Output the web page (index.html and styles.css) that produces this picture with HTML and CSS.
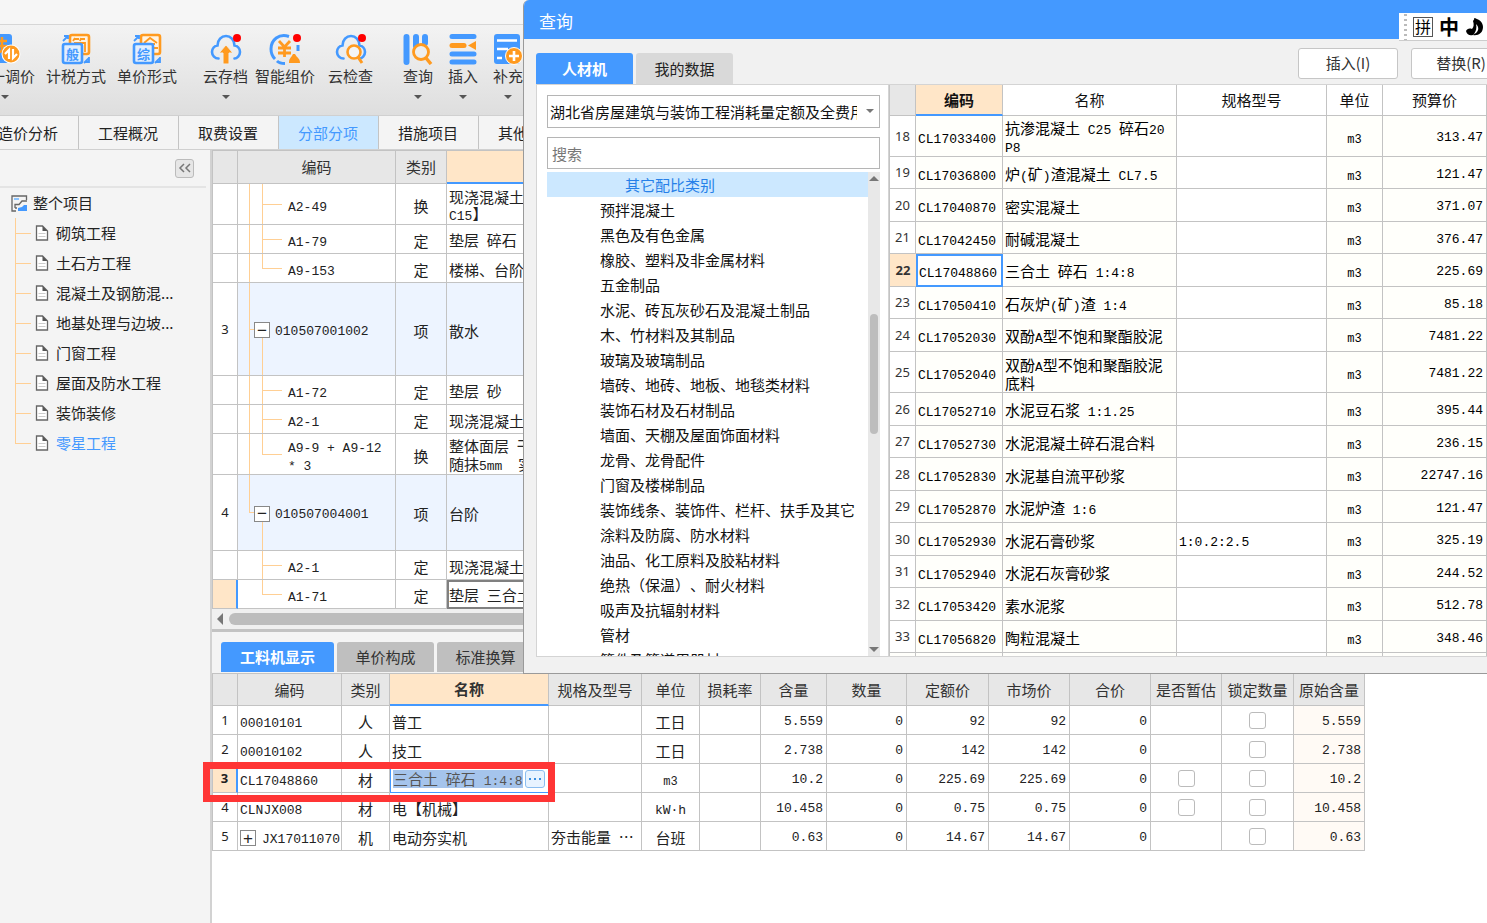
FILE: index.html
```html
<!DOCTYPE html>
<html lang="zh-CN">
<head>
<meta charset="utf-8">
<title>分部分项</title>
<link rel="stylesheet" href="styles.css">
</head>
<body>
<svg class="defs" aria-hidden="true">
  <symbol id="doc" viewBox="0 0 14 16"><path d="M1.500 1h6l5 5v9h-11z" fill="#fff" stroke="#666" stroke-width="1.300"/><path d="M7.500 1l5 5h-5z" fill="#555"/><path d="M3.500 8.500h7M3.500 11.500h7" stroke="#ccc"/></symbol>
  <symbol id="cloud" viewBox="0 0 32 32"><path d="M8.500 25.500C5 25.500 2 22.500 2 19c0-3.500 2.500-6 5.500-6.500C7.500 7 11.500 3 16 3s8.500 4 8.500 9.500C27.500 13 30 15.500 30 19c0 3.500-3 6.500-5.500 6.500" fill="none" stroke="#4499ff" stroke-width="2.600" stroke-linecap="round"/></symbol>
</svg>
<div class="app">
  <header class="titlebar"></header>
  <div class="ribbon">
    <div class="group group-price">
      <button class="tool"><svg class="pic" viewBox="0 0 32 32"><rect x="1" y="1" width="22" height="29" rx="3" fill="#4499ff"/><path d="M7 8h11M5 13h13M13 4v14l-5 2" stroke="#ff9a1f" stroke-width="2.500" fill="none"/><circle cx="22" cy="21" r="9.500" fill="#fff"/><circle cx="22" cy="21" r="8.500" fill="#ff9a1f"/><path d="M20 26v-9l-4 4M24 16v9l4-4" stroke="#fff" stroke-width="2.200" fill="none"/></svg><span>统一调价</span><i class="caret"></i></button>
      <button class="tool"><svg class="pic" viewBox="0 0 32 32"><rect x="10" y="2" width="19" height="19" rx="2" fill="#fff3e2" stroke="#ff9a1f" stroke-width="2.600"/><path d="M15 5l-2 3M14 6h5M21 5l-1 3M20 6h5M14 10h11v9" stroke="#ff9a1f" stroke-width="1.800" fill="none"/><rect x="3" y="11" width="19" height="19" rx="2" fill="#e2effd" stroke="#4499ff" stroke-width="2.600"/><text x="12.500" y="25.500" class="glyph">般</text><path d="M3 8l5-5M4 3h4v3M24 30l5-5M29 24v5h-4" stroke="#4499ff" stroke-width="1.800" fill="none"/></svg><span>计税方式</span></button>
      <button class="tool"><svg class="pic" viewBox="0 0 32 32"><rect x="10" y="2" width="19" height="19" rx="2" fill="#fff3e2" stroke="#ff9a1f" stroke-width="2.600"/><path d="M13 10l6-5 7 5M15 11h9M23 15h4" stroke="#ff9a1f" stroke-width="1.800" fill="none"/><rect x="3" y="11" width="19" height="19" rx="2" fill="#e2effd" stroke="#4499ff" stroke-width="2.600"/><text x="12.500" y="25.500" class="glyph">综</text><path d="M3 8l5-5M4 3h4v3M24 30l5-5M29 24v5h-4" stroke="#4499ff" stroke-width="1.800" fill="none"/></svg><span>单价形式</span></button>
    </div>
    <div class="group group-cloud">
      <button class="tool"><svg class="pic" viewBox="0 0 32 32"><use href="#cloud"/><path d="M16 12l7 8h-4v11h-6V20H9z" fill="#ff9a1f" stroke="#eee"/><circle cx="27" cy="5" r="4" fill="#f00"/></svg><span>云存档</span><i class="caret"></i></button>
      <button class="tool"><svg class="pic" viewBox="0 0 32 32"><path d="M20 3.500C10 0 2 7 2 16c0 5 2 8 4 10M8 28c2 2 5 2.500 8 2.500M29 12v6" fill="none" stroke="#4499ff" stroke-width="3"/><path d="M10 8l5.500 6L21 8M9 15h13M9 20h13M15.500 13v11" fill="none" stroke="#ff9a1f" stroke-width="2.800"/><path d="M20 30c0-5 2-5 4-9h2c2 4 5 4 5 9z" fill="#ff9a1f"/><circle cx="28" cy="5" r="4" fill="#f00"/></svg><span>智能组价</span></button>
    </div>
    <div class="group group-check">
      <button class="tool"><svg class="pic" viewBox="0 0 32 32"><use href="#cloud"/><circle cx="19" cy="19" r="6.500" fill="#f4f4f4" stroke="#ff9a1f" stroke-width="2.600"/><path d="M23 24l4 6" stroke="#ff9a1f" stroke-width="3"/><circle cx="27" cy="5" r="4" fill="#f00"/></svg><span>云检查</span></button>
    </div>
    <div class="group group-edit">
      <button class="tool"><svg class="pic" viewBox="0 0 32 32"><path d="M4.500 4v25M14 4v9M23 4v6" stroke="#4499ff" stroke-width="6" stroke-linecap="round"/><circle cx="19" cy="19" r="7.500" fill="#eee" stroke="#ff9a1f" stroke-width="2.800"/><path d="M24 25l5 6" stroke="#ff9a1f" stroke-width="3.500"/></svg><span>查询</span><i class="caret"></i></button>
      <button class="tool"><svg class="pic" viewBox="0 0 32 32"><path d="M5 3.500h22M5 21h22M5 29h22" stroke="#4499ff" stroke-width="5" stroke-linecap="round"/><path d="M5 12.500h12" stroke="#ff9a1f" stroke-width="5" stroke-linecap="round"/><path d="M21 12.500l8-4.500v9z" fill="#ff9a1f"/></svg><span>插入</span><i class="caret"></i></button>
      <button class="tool"><svg class="pic" viewBox="0 0 32 32"><rect x="2" y="1" width="26" height="30" rx="3" fill="#4499ff"/><path d="M5 7.500h20M5 16h11M5 25h5" stroke="#fff" stroke-width="2.500"/><circle cx="22" cy="23" r="8.500" fill="#ff9a1f" stroke="#fff"/><path d="M17 23h10M22 18v10" stroke="#fff" stroke-width="2.600"/></svg><span>补充</span><i class="caret"></i></button>
    </div>
  </div>
  <nav class="tabs">
    <button>造价分析</button><button>工程概况</button><button>取费设置</button><button class="on">分部分项</button><button>措施项目</button><button>其他项目</button>
  </nav>
  <div class="main">
    <aside class="side">
      <div class="side-head"><button class="collapse" aria-label="收起"><svg viewBox="0 0 14 12" width="14" height="12"><path d="M6 2L2 6l4 4M12 2L8 6l4 4" fill="none" stroke="#777" stroke-width="1.500"/></svg></button></div>
      <div class="root"><svg viewBox="0 0 17 17" width="17" height="17"><path d="M15.500 5V1H1v15h4" fill="none" stroke="#666" stroke-width="1.300"/><path d="M3 4h5" stroke="#8cc4ff" stroke-width="2"/><path d="M4 13V9.500h4L11 6h5M4 13h2" fill="none" stroke="#666" stroke-width="1.300"/><path d="M7 16v-3l4-1 2-2h3v6z" fill="#4499ff"/></svg>整个项目</div>
      <ul class="tree">
        <li><svg><use href="#doc"/></svg>砌筑工程</li>
        <li><svg><use href="#doc"/></svg>土石方工程</li>
        <li><svg><use href="#doc"/></svg>混凝土及钢筋混...</li>
        <li><svg><use href="#doc"/></svg>地基处理与边坡...</li>
        <li><svg><use href="#doc"/></svg>门窗工程</li>
        <li><svg><use href="#doc"/></svg>屋面及防水工程</li>
        <li><svg><use href="#doc"/></svg>装饰装修</li>
        <li class="on"><svg><use href="#doc"/></svg>零星工程</li>
      </ul>
    </aside>
    <section class="work">
      <table class="grid items">
        <colgroup><col class="w26"><col class="w158"><col class="w51"><col></colgroup>
        <thead><tr><th></th><th>编码</th><th>类别</th><th class="hot"></th></tr></thead>
        <tbody>
          <tr class="two"><td></td><td class="kid"><b>A2-49</b></td><td class="c">换</td><td>现浇混凝土<br><b>C15</b>】</td></tr>
          <tr><td></td><td class="kid"><b>A1-79</b></td><td class="c">定</td><td>垫层<b> </b>碎石</td></tr>
          <tr><td></td><td class="kid last"><b>A9-153</b></td><td class="c">定</td><td>楼梯、台阶</td></tr>
          <tr class="parent tall"><td class="n">3</td><td class="grp"><button class="exp" aria-label="折叠">−</button><b>010507001002</b></td><td class="c">项</td><td>散水</td></tr>
          <tr><td></td><td class="kid"><b>A1-72</b></td><td class="c">定</td><td>垫层<b> </b>砂</td></tr>
          <tr><td></td><td class="kid"><b>A2-1</b></td><td class="c">定</td><td>现浇混凝土</td></tr>
          <tr class="two"><td></td><td class="kid last"><b>A9-9 + A9-12<br>* 3</b></td><td class="c">换</td><td>整体面层<b> </b>干<br>随抹<b>5mm&nbsp; </b>实</td></tr>
          <tr class="parent mid"><td class="n">4</td><td class="grp end"><button class="exp" aria-label="折叠">−</button><b>010507004001</b></td><td class="c">项</td><td>台阶</td></tr>
          <tr><td></td><td class="kid only"><b>A2-1</b></td><td class="c">定</td><td>现浇混凝土</td></tr>
          <tr><td class="n cur"></td><td class="kid only last"><b>A1-71</b></td><td class="c">定</td><td class="focus">垫层<b> </b>三合土</td></tr>
        </tbody>
      </table>
      <div class="hscroll"><i class="left"></i><i class="thumb"></i></div>
      <div class="subtabs"><button class="on">工料机显示</button><button>单价构成</button><button>标准换算</button></div>
      <div class="detail">
        <table class="grid parts">
          <colgroup><col class="w26"><col class="w104"><col class="w48"><col class="w159"><col class="w93"><col class="w58"><col class="w61"><col class="w66"><col class="w80"><col class="w82"><col class="w81"><col class="w81"><col class="w71"><col class="w72"><col class="w71"></colgroup>
          <thead><tr><th></th><th>编码</th><th>类别</th><th class="hot">名称</th><th>规格及型号</th><th>单位</th><th>损耗率</th><th>含量</th><th>数量</th><th>定额价</th><th>市场价</th><th>合价</th><th>是否暂估</th><th>锁定数量</th><th>原始含量</th></tr></thead>
          <tbody>
            <tr><td class="n">1</td><td><b>00010101</b></td><td class="c">人</td><td>普工</td><td></td><td class="c">工日</td><td></td><td class="r">5.559</td><td class="r">0</td><td class="r">92</td><td class="r">92</td><td class="r">0</td><td></td><td class="c"><input type="checkbox" aria-label="锁定数量"></td><td class="r orig">5.559</td></tr>
            <tr><td class="n">2</td><td><b>00010102</b></td><td class="c">人</td><td>技工</td><td></td><td class="c">工日</td><td></td><td class="r">2.738</td><td class="r">0</td><td class="r">142</td><td class="r">142</td><td class="r">0</td><td></td><td class="c"><input type="checkbox" aria-label="锁定数量"></td><td class="r orig">2.738</td></tr>
            <tr><td class="n cur">3</td><td><b>CL17048860</b></td><td class="c">材</td><td class="edit"><div><span class="sel">三合土<b> </b>碎石<b> 1:4:8</b></span><button class="more" aria-label="更多"><svg viewBox="0 0 14 4" width="14" height="4"><path d="M1 1h2v2H1zM6 1h2v2H6zM11 1h2v2h-2z" fill="#3a8ee0"/></svg></button></div></td><td></td><td class="c"><b class="unit">m3</b></td><td></td><td class="r">10.2</td><td class="r">0</td><td class="r">225.69</td><td class="r">225.69</td><td class="r">0</td><td class="c"><input type="checkbox" aria-label="是否暂估"></td><td class="c"><input type="checkbox" aria-label="锁定数量"></td><td class="r orig">10.2</td></tr>
            <tr><td class="n">4</td><td><b>CLNJX008</b></td><td class="c">材</td><td>电【机械】</td><td></td><td class="c"><b>kW·h</b></td><td></td><td class="r">10.458</td><td class="r">0</td><td class="r">0.75</td><td class="r">0.75</td><td class="r">0</td><td class="c"><input type="checkbox" aria-label="是否暂估"></td><td class="c"><input type="checkbox" aria-label="锁定数量"></td><td class="r orig">10.458</td></tr>
            <tr><td class="n">5</td><td><button class="exp" aria-label="展开">+</button><b>JX17011070</b></td><td class="c">机</td><td>电动夯实机</td><td>夯击能量<b> </b>⋯</td><td class="c">台班</td><td></td><td class="r">0.63</td><td class="r">0</td><td class="r">14.67</td><td class="r">14.67</td><td class="r">0</td><td></td><td class="c"><input type="checkbox" aria-label="锁定数量"></td><td class="r orig">0.63</td></tr>
          </tbody>
        </table>
        <div class="mark"></div>
      </div>
    </section>
  </div>

  <div class="dialog" role="dialog" aria-label="查询">
    <div class="dlg-title">查询</div>
    <div class="ime"><i class="grip"></i><span class="pin">拼</span><span class="zh">中</span><svg viewBox="0 0 20 20" width="20" height="20"><path d="M9 1c5 1 9 4 9 9 0 6-5 9-10 8 5-3 6-9 1-17z" fill="#000"/><path d="M1 14c1-2 3-3 6-2 2-2 2-5 1-8l2-3c4 7 3 14-2 17-3 1-6 0-7-4z" fill="#000"/><path d="M11 7c3 3 3 6 0 9l-2 1c2-3 3-6 2-10z" fill="#fff"/></svg></div>
    <div class="dlg-bar">
      <div class="dlg-tabs"><button class="on">人材机</button><button>我的数据</button></div>
      <div class="dlg-actions"><button>插入(I)</button><button>替换(R)</button></div>
    </div>
    <div class="dlg-body">
      <div class="pick">
        <div class="combo"><select aria-label="定额库"><option>湖北省房屋建筑与装饰工程消耗量定额及全费用基价表</option></select></div>
        <input class="search" type="text" placeholder="搜索" aria-label="搜索">
        <div class="list">
          <ul>
            <li class="on">其它配比类别</li><li>预拌混凝土</li><li>黑色及有色金属</li><li>橡胶、塑料及非金属材料</li><li>五金制品</li><li>水泥、砖瓦灰砂石及混凝土制品</li><li>木、竹材料及其制品</li><li>玻璃及玻璃制品</li><li>墙砖、地砖、地板、地毯类材料</li><li>装饰石材及石材制品</li><li>墙面、天棚及屋面饰面材料</li><li>龙骨、龙骨配件</li><li>门窗及楼梯制品</li><li>装饰线条、装饰件、栏杆、扶手及其它</li><li>涂料及防腐、防水材料</li><li>油品、化工原料及胶粘材料</li><li>绝热（保温）、耐火材料</li><li>吸声及抗辐射材料</li><li>管材</li><li>管件及管道用器材</li>
          </ul>
          <div class="vscroll"><i class="up"></i><i class="thumb"></i><i class="down"></i></div>
        </div>
      </div>
      <div class="result">
        <table class="grid mats">
          <colgroup><col class="w27"><col class="w87"><col class="w174"><col class="w150"><col class="w56"><col></colgroup>
          <thead><tr><th class="corner"></th><th class="hot">编码</th><th>名称</th><th>规格型号</th><th>单位</th><th>预算价</th></tr></thead>
          <tbody>
            <tr class="two"><td class="n">18</td><td><b>CL17033400</b></td><td>抗渗混凝土<b> C25 </b>碎石<b>20</b><br><b>P8</b></td><td></td><td class="c"><b class="unit">m3</b></td><td class="r">313.47</td></tr>
            <tr><td class="n">19</td><td><b>CL17036800</b></td><td>炉<b>(</b>矿<b>)</b>渣混凝土<b> CL7.5</b></td><td></td><td class="c"><b class="unit">m3</b></td><td class="r">121.47</td></tr>
            <tr><td class="n">20</td><td><b>CL17040870</b></td><td>密实混凝土</td><td></td><td class="c"><b class="unit">m3</b></td><td class="r">371.07</td></tr>
            <tr><td class="n">21</td><td><b>CL17042450</b></td><td>耐碱混凝土</td><td></td><td class="c"><b class="unit">m3</b></td><td class="r">376.47</td></tr>
            <tr><td class="n cur">22</td><td class="pickd"><b>CL17048860</b></td><td>三合土<b> </b>碎石<b> 1:4:8</b></td><td></td><td class="c"><b class="unit">m3</b></td><td class="r">225.69</td></tr>
            <tr><td class="n">23</td><td><b>CL17050410</b></td><td>石灰炉<b>(</b>矿<b>)</b>渣<b> 1:4</b></td><td></td><td class="c"><b class="unit">m3</b></td><td class="r">85.18</td></tr>
            <tr><td class="n">24</td><td><b>CL17052030</b></td><td>双酚<b>A</b>型不饱和聚酯胶泥</td><td></td><td class="c"><b class="unit">m3</b></td><td class="r">7481.22</td></tr>
            <tr class="two"><td class="n">25</td><td><b>CL17052040</b></td><td>双酚<b>A</b>型不饱和聚酯胶泥<br>底料</td><td></td><td class="c"><b class="unit">m3</b></td><td class="r">7481.22</td></tr>
            <tr><td class="n">26</td><td><b>CL17052710</b></td><td>水泥豆石浆<b> 1:1.25</b></td><td></td><td class="c"><b class="unit">m3</b></td><td class="r">395.44</td></tr>
            <tr><td class="n">27</td><td><b>CL17052730</b></td><td>水泥混凝土碎石混合料</td><td></td><td class="c"><b class="unit">m3</b></td><td class="r">236.15</td></tr>
            <tr><td class="n">28</td><td><b>CL17052830</b></td><td>水泥基自流平砂浆</td><td></td><td class="c"><b class="unit">m3</b></td><td class="r">22747.16</td></tr>
            <tr><td class="n">29</td><td><b>CL17052870</b></td><td>水泥炉渣<b> 1:6</b></td><td></td><td class="c"><b class="unit">m3</b></td><td class="r">121.47</td></tr>
            <tr><td class="n">30</td><td><b>CL17052930</b></td><td>水泥石膏砂浆</td><td><b>1:0.2:2.5</b></td><td class="c"><b class="unit">m3</b></td><td class="r">325.19</td></tr>
            <tr><td class="n">31</td><td><b>CL17052940</b></td><td>水泥石灰膏砂浆</td><td></td><td class="c"><b class="unit">m3</b></td><td class="r">244.52</td></tr>
            <tr><td class="n">32</td><td><b>CL17053420</b></td><td>素水泥浆</td><td></td><td class="c"><b class="unit">m3</b></td><td class="r">512.78</td></tr>
            <tr><td class="n">33</td><td><b>CL17056820</b></td><td>陶粒混凝土</td><td></td><td class="c"><b class="unit">m3</b></td><td class="r">348.46</td></tr>
            <tr><td></td><td></td><td></td><td></td><td></td><td></td></tr>
          </tbody>
        </table>
      </div>
    </div>
  </div>
</div>
</body>
</html>
```
FILE: styles.css
```css
* { box-sizing: border-box; }
body { margin: 0; overflow: hidden; background: #f4f4f4; color: #222; font: 15px/20px "Noto Sans CJK SC", sans-serif; text-spacing-trim: space-all; }
button, input, select { font: inherit; color: inherit; margin: 0; }
button { padding: 0; border: 0; background: none; white-space: nowrap; }
ul { list-style: none; margin: 0; padding: 0; }
.defs { display: none; }
.app { position: relative; display: flex; flex-direction: column; height: 100vh; overflow: hidden; }
.titlebar { flex: none; height: 25px; background: #f6f6f6; border-bottom: 1px solid #d6d6d6; }

/* ribbon */
.ribbon { flex: none; display: flex; height: 91px; padding-top: 8px; background: linear-gradient(#f3f3f3, #dedede); border-bottom: 1px solid #d0d0d0; color: #333; }
.group { display: flex; flex: none; }
.group-price { margin-left: -25px; gap: 11px; }
.group-cloud { margin-left: 26px; gap: 7px; }
.group-check { margin-left: 13px; }
.group-edit { margin-left: 29px; gap: 13px; }
.tool { display: flex; flex-direction: column; align-items: center; }
.group-edit .tool { width: 32px; }
.pic { width: 32px; height: 32px; margin-bottom: 1px; }
.glyph { font: bold 13px "Noto Sans CJK SC", sans-serif; text-anchor: middle; fill: #4499ff; }
.caret { margin-top: 9px; border: 4px solid transparent; border-top-color: #555; border-bottom: 0; }

.tabs { flex: none; display: flex; height: 34px; margin-left: -21px; border-bottom: 1px solid #d0d0d0; }
.tabs button { flex: none; width: 100px; padding-right: 1px; border-right: 1px solid #c4c4c4; }
.tabs .on { background: #cce8ff; color: #4499ff; }

.main { flex: 1; display: flex; min-height: 0; }
.side { flex: none; width: 212px; border-right: 2px solid #d2d2d2; }
.side-head { display: flex; justify-content: flex-end; align-items: center; height: 38px; margin-right: 4px; padding-right: 12px; border-bottom: 2px solid #e4e4e4; }
.collapse { display: flex; align-items: center; justify-content: center; width: 19px; height: 19px; border: 1px solid #bbb; border-radius: 3px; background: #e6e6e6; }
.root { display: flex; align-items: center; gap: 5px; height: 30px; padding-left: 11px; }
.tree { margin-left: 15px; }
.tree li { display: flex; align-items: center; gap: 7px; height: 30px; padding-left: 20px; background: linear-gradient(#ffcf94, #ffcf94) 0 0 / 1px 100% no-repeat, linear-gradient(#ffcf94, #ffcf94) 0 50% / 16px 1px no-repeat; }
.tree li:last-child { background-size: 1px 50%, 16px 1px; }
.tree svg { flex: none; width: 14px; height: 16px; }
.tree .on { color: #4499ff; }

/* grids */
.grid { border-collapse: separate; border-spacing: 0; table-layout: fixed; background: #fff; }
.grid th, .grid td { border: solid #c3c3c3; border-width: 0 1px 1px 0; overflow: hidden; white-space: nowrap; }
.grid th { height: 33px; padding: 0; background: #e7e7e7; font-weight: normal; color: #333; }
.grid td { height: 29px; padding: 2px 2px 0; line-height: 17px; text-align: left; }
.grid tr > :first-child { border-left-width: 1px; }
.grid .hot { background: #ffe6c8; border-bottom: 2px solid #4499ff; font-weight: bold; }
.grid b { font: 13px/1 "Liberation Mono", monospace; }
.grid .c { text-align: center; }
.grid .r { text-align: right; padding: 3px 3px 0; font: 13px/17px "Liberation Mono", monospace; }
.grid .n { padding: 0; text-align: center; font: 13px/17px "Noto Sans", sans-serif; }
.grid .cur { background: #ffe6c8; font-weight: bold; border-right: 2px solid #4499ff; }
.grid b.unit { font-size: 12px; }
.w26 { width: 26px; } .w27 { width: 27px; } .w48 { width: 48px; } .w51 { width: 51px; } .w56 { width: 56px; } .w58 { width: 58px; }
.w61 { width: 61px; } .w66 { width: 66px; } .w71 { width: 71px; } .w72 { width: 72px; } .w80 { width: 80px; } .w81 { width: 81px; }
.w82 { width: 82px; } .w87 { width: 87px; } .w93 { width: 93px; } .w104 { width: 104px; } .w150 { width: 150px; } .w158 { width: 158px; }
.w159 { width: 159px; } .w174 { width: 174px; }

.work { flex: 1; min-width: 0; display: flex; flex-direction: column; }
.items { width: 100%; border-top: 1px solid #c3c3c3; }
.items .two td { height: 41px; }
.items .tall td { height: 93px; }
.items .mid td { height: 76px; }
.items .parent td:not(.n) { background-color: #edf4ff; }
.items td.focus { border: 2px solid #808080; padding: 0; }
.items .kid, .items .grp { --l: linear-gradient(#ffcf94, #ffcf94); background-repeat: no-repeat; }
.items .kid { padding-left: 50px; background-image: var(--l), var(--l), var(--l); background-size: 1px 100%, 1px 100%, 20px 1px; background-position: 11px 0, 24px 0, 24px 50%; }
.items .kid.last { background-size: 1px 100%, 1px 50%, 20px 1px; }
.items .kid.only { background-size: 0 0, 1px 100%, 20px 1px; }
.items .kid.only.last { background-size: 0 0, 1px 50%, 20px 1px; }
.items .grp { padding: 0 0 0 16px; background-image: var(--l), var(--l), var(--l); background-size: 1px 100%, 1px 50%, 6px 1px; background-position: 11px 0, 24px 100%, 11px 50%; }
.items .grp.end { background-size: 1px 50%, 1px 50%, 6px 1px; }
.exp { width: 16px; height: 16px; margin-right: 6px; border: 1px solid #888; background: #fff; font: 17px/13px "Liberation Sans", sans-serif; vertical-align: middle; }
.items .exp { margin-right: 5px; }

.hscroll { flex: none; display: flex; align-items: center; gap: 6px; height: 23px; padding-left: 5px; background: #f0f0f0; border-bottom: 3px solid #c3c3c3; }
.left { border: 6px solid transparent; border-right-color: #777; border-left: 0; }
.hscroll .thumb { flex: 1; height: 12px; border-radius: 6px; background: #bdbdbd; }
.subtabs { flex: none; display: flex; gap: 3px; height: 41px; padding: 10px 0 1px 9px; }
.subtabs button { width: 97px; border-radius: 3px 3px 0 0; background: #bfbfbf; color: #333; }
.subtabs .on { width: 113px; background: #4499ff; color: #fff; font-weight: bold; }
.detail { position: relative; flex: 1; background: #fff; }
.parts { width: 1153px; border-top: 1px solid #c3c3c3; }
.parts th { height: 32px; }
.parts .orig { background: #fffaf5; }
.parts td.edit { border: 1px solid #4499ff; padding: 0 3px 0 2px; }
.edit div { display: flex; align-items: center; justify-content: space-between; }
.sel { background: #a5c4ec; color: #555; }
.more { display: flex; align-items: center; justify-content: center; width: 20px; height: 18px; border: 1px solid #8bbdf0; border-radius: 3px; background: #e8f3ff; }
.parts input { appearance: none; display: block; width: 17px; height: 17px; margin: -2px auto 0; border: 1px solid #bbb; border-radius: 3px; background: #fff; }
.mark { position: absolute; left: -9px; top: 89px; width: 352px; height: 40px; border: 7px solid #ff3535; }

/* query window */
.dialog { position: absolute; left: 523px; right: 0; top: 0; height: 674px; display: flex; flex-direction: column; background: #f1f1f1; border: solid #9a9a9a; border-width: 0 0 1px 1px; border-radius: 6px 0 0 0; overflow: hidden; }
.dlg-title { flex: none; height: 39px; padding-left: 15px; background: #4499ff; color: #fff; font-size: 17px; line-height: 42px; }
.ime { position: absolute; right: 0; top: 13px; display: flex; align-items: center; gap: 6px; width: 88px; height: 28px; padding-left: 5px; background: #fff; border-bottom: 1px solid #ccc; color: #000; overflow: hidden; }
.ime svg { flex: none; }
.grip { flex: none; width: 3px; height: 26px; background: repeating-linear-gradient(#bbb 0 2px, #fff 2px 5px); }
.pin { flex: none; width: 20px; height: 20px; border: 1px solid #555; font-size: 16px; line-height: 17px; text-align: center; }
.zh { flex: none; font-size: 20px; font-weight: bold; }
.dlg-bar { flex: none; display: flex; justify-content: space-between; height: 45px; padding-left: 12px; }
.dlg-tabs { display: flex; gap: 3px; padding-top: 14px; }
.dlg-tabs button { width: 97px; border-radius: 3px 3px 0 0; background: #d9d9d9; }
.dlg-tabs .on { background: #4499ff; color: #fff; font-weight: bold; }
.dlg-actions { display: flex; gap: 13px; padding-top: 9px; margin-right: -24px; }
.dlg-actions button { width: 100px; height: 31px; padding-bottom: 1px; border: 1px solid #c6c6c6; border-radius: 3px; background: #fff; color: #333; }
.dlg-body { flex: 1; min-height: 0; display: flex; margin: 0 0 16px 12px; border: solid #d4d4d4; border-width: 1px 0 1px 1px; background: #fff; }
.pick { flex: none; width: 352px; display: flex; flex-direction: column; padding: 10px 8px 0 10px; border-right: 1px solid #d4d4d4; }
.combo { flex: none; position: relative; height: 33px; }
.combo::after { content: ""; position: absolute; right: 6px; top: 14px; border: 4px solid transparent; border-top-color: #777; border-bottom: 0; }
.combo select { appearance: none; width: 100%; height: 100%; padding: 0 22px 0 2px; border: 1px solid #b5b5b5; border-radius: 0; background: #fff; overflow: hidden; color: #111; }
.search { flex: none; height: 32px; margin: 9px 0 3px; padding: 0 4px; border: 1px solid #b5b5b5; background: #fff; }
.search::placeholder { color: #777; }
.list { flex: 1; min-height: 0; display: flex; overflow: hidden; color: #111; }
.list ul { flex: 1; }
.list li { height: 25px; padding-left: 53px; line-height: 25px; white-space: nowrap; }
.list .on { padding-left: 78px; background: #cce8ff; color: #2680e8; }
.vscroll { flex: none; width: 12px; display: flex; flex-direction: column; align-items: center; justify-content: space-between; padding: 4px 0; background: #e8e8e8; }
.vscroll .thumb { width: 8px; height: 120px; margin-bottom: 80px; border-radius: 4px; background: #bdbdbd; }
.up { border: 5px solid transparent; border-bottom-color: #777; border-top: 0; }
.down { border: 5px solid transparent; border-top-color: #777; border-bottom: 0; }
.result { flex: 1; min-width: 0; overflow: hidden; }
.mats { width: 100%; color: #000; }
.mats th { height: 31px; background: #fff; color: #111; }
.mats .corner { background: #e7e7e7; }
.mats td { height: 33px; background: #fffffb; }
.mats tr:nth-child(even) td { height: 32px; }
.mats tbody .two td, .mats tbody .two:nth-child(even) td { height: 41px; }
.mats td:nth-child(4) { background: #fff; }
.mats .n { background: #fff; color: #333; }
.mats td.pickd { border: 2px solid #4499ff; padding: 1px 0 0 1px; background: #fff; }
.mats td.cur { background: #ffe6c8; border-right: 0; }
```
